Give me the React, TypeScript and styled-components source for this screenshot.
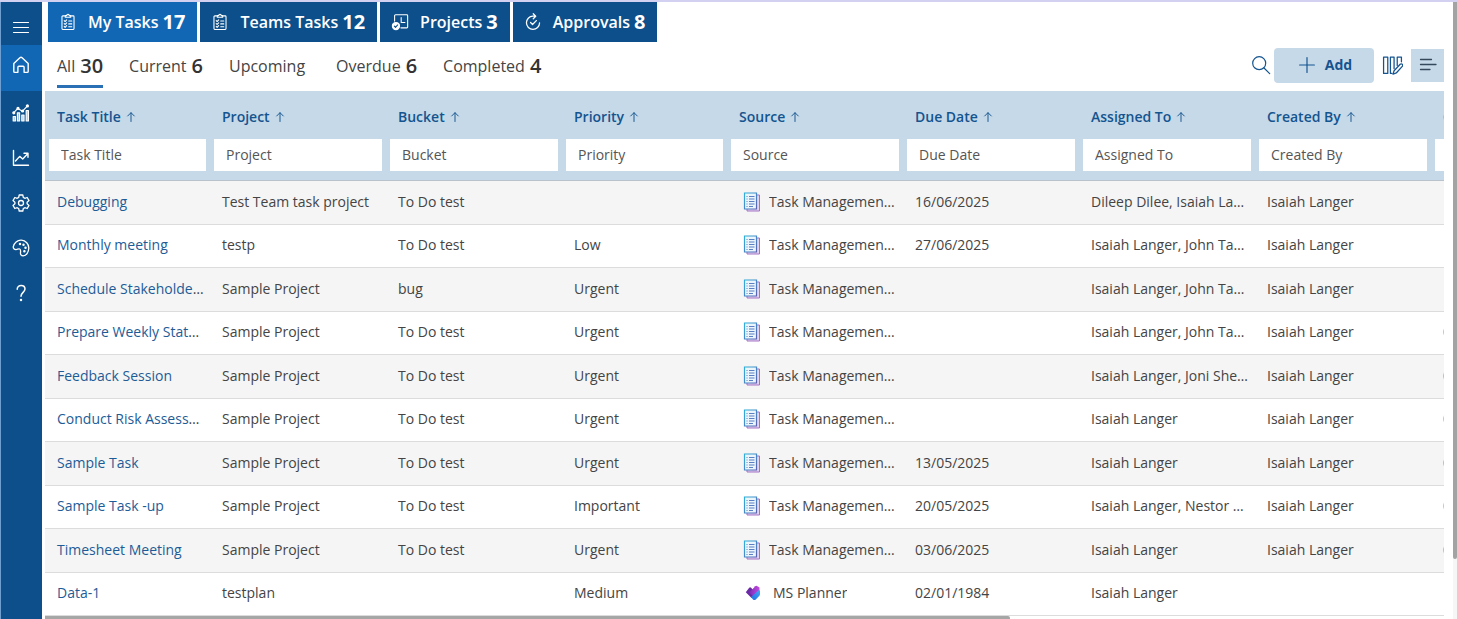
import React from "react";
import styled, { createGlobalStyle, css } from "styled-components";

const GlobalStyle = createGlobalStyle`
  *, *::before, *::after { box-sizing: border-box; }
  body {
    margin: 0;
    background: #ffffff;
    color: #444444;
    font-family: "Open Sans", "Noto Sans", sans-serif;
    font-size: 14px;
    line-height: 20px;
  }
  button, input { font: inherit; color: inherit; }
`;

const Page = styled.div`
  display: flex;
  min-height: 100vh;
  border-top: 2px solid #d3d1f1;
`;

const Sidebar = styled.nav`
  flex: none;
  width: 42px;
  display: flex;
  flex-direction: column;
  background: #0c4f8a;
  box-shadow: inset 1px 0 #6f9fd0;
`;

const SideButton = styled.button<{ $active?: boolean; $menu?: boolean }>`
  display: flex;
  align-items: center;
  justify-content: center;
  height: 45px;
  margin-left: 1px;
  padding: 0 1px 2px 0;
  border: 0;
  color: #ffffff;
  background: ${(p) => (p.$active ? "#1267b4" : "transparent")};
  cursor: pointer;
  ${(p) => p.$active && css`height: 46px; padding-bottom: 6px;`}
  ${(p) => p.$menu && css`height: 43px; padding: 9px 1px 0 0;`}
`;

const Main = styled.main`
  flex: 1;
  min-width: 0;
  display: flex;
  flex-direction: column;
  padding: 0 9px 0 3px;
`;

const TabBar = styled.div`
  display: flex;
  gap: 3px;
  padding-left: 3px;
`;

const Tab = styled.button<{ $active?: boolean }>`
  display: flex;
  align-items: center;
  height: 40px;
  padding: 0 12px 0 11px;
  border: 0;
  color: #ffffff;
  background: ${(p) => (p.$active ? "#1267b4" : "#0c4f8a")};
  font-size: 16px;
  font-weight: 600;
  line-height: 24px;
  white-space: nowrap;
  cursor: pointer;
`;

const TabLabel = styled.span`
  margin: 0 4px 0 11px;
`;

const TabCount = styled.span`
  font-size: 20px;
  font-weight: 700;
`;

const Toolbar = styled.div`
  display: flex;
  align-items: center;
  justify-content: space-between;
  height: 49px;
`;

const Filters = styled.div`
  display: flex;
  gap: 26px;
  height: 100%;
  padding-left: 12px;
`;

const Filter = styled.button<{ $active?: boolean }>`
  display: flex;
  align-items: center;
  gap: 5px;
  height: 46px;
  padding: 4px 0 0;
  border: 0;
  border-bottom: 3px solid ${(p) => (p.$active ? "#2a70b4" : "transparent")};
  background: none;
  font-size: 16px;
  white-space: nowrap;
  cursor: pointer;
`;

const FilterCount = styled.span`
  font-size: 20px;
  font-weight: 600;
  color: #333333;
`;

const Actions = styled.div`
  display: flex;
  align-items: center;
  padding-bottom: 3px;
  color: #14548f;
`;

const IconButton = styled.button<{ $filled?: boolean }>`
  display: flex;
  align-items: center;
  justify-content: center;
  width: ${(p) => (p.$filled ? "33px" : "37px")};
  height: 33px;
  padding: 0;
  border: 0;
  background: ${(p) => (p.$filled ? "#c5d9e8" : "none")};
  cursor: pointer;
`;

const SearchButton = styled(IconButton)`
  width: 26px;
`;

const AddButton = styled.button`
  display: flex;
  align-items: center;
  justify-content: center;
  gap: 9px;
  width: 100px;
  height: 35px;
  padding: 0 0 1px 2px;
  border: 0;
  border-radius: 4px;
  background: #c5d9e8;
  font-weight: 700;
  cursor: pointer;
`;

const GridView = styled.section`
  flex: 1;
  overflow: hidden;
`;

const Table = styled.table`
  width: 2026px;
  table-layout: fixed;
  border-collapse: collapse;
`;

const Col = styled.col<{ $narrow?: boolean }>`
  width: ${(p) => (p.$narrow ? "165px" : "176px")};
`;

const HeadCell = styled.th`
  height: 89px;
  padding: 0 4px;
  vertical-align: top;
  text-align: left;
  font-weight: 400;
  background: #c5d9e8;
  border-bottom: 1px solid #b9c2ca;
`;

const SortButton = styled.button`
  display: flex;
  align-items: center;
  gap: 4px;
  height: 48px;
  padding: 3px 8px 0;
  border: 0;
  background: none;
  color: #14548f;
  font-weight: 600;
  white-space: nowrap;
  cursor: pointer;
`;

const FilterInput = styled.input`
  display: block;
  width: 100%;
  height: 32px;
  padding: 0 12px 1px;
  border: 0;
  background: #ffffff;
  &::placeholder { color: #555555; opacity: 1; }
`;

const Row = styled.tr`
  height: 43px;
  border-bottom: 1px solid #dcdcdc;
  &:nth-child(odd) { height: 44px; background: #f5f5f5; }
`;

const Cell = styled.td`
  padding: 0 5px 1px 12px;
  overflow: hidden;
  text-overflow: ellipsis;
  white-space: nowrap;
`;

const TaskLink = styled.a`
  color: #1d5c97;
  text-decoration: none;
`;

const Source = styled.div<{ $planner?: boolean }>`
  display: flex;
  align-items: center;
  gap: ${(p) => (p.$planner ? "12px" : "8px")};
  padding-left: ${(p) => (p.$planner ? "6px" : "4px")};
  svg { flex: none; }
`;

const Ellipsis = styled.span`
  overflow: hidden;
  text-overflow: ellipsis;
`;

const HorizontalThumb = styled.div`
  width: 69%;
  height: 4px;
  border-radius: 0 2px 0 0;
  background: #a6a6a6;
`;

const VerticalTrack = styled.div`
  flex: none;
  width: 4px;
  background: #f6f6f6;
`;

const VerticalThumb = styled.div`
  height: 90vh;
  border-radius: 0 0 2px 2px;
  background: #a3a3a3;
`;

type IconProps = { size?: number; stroke?: number; children: React.ReactNode };

const Icon = ({ size = 20, stroke = 1.3, children }: IconProps) => (
  <svg
    width={size}
    height={size}
    viewBox="0 0 20 20"
    fill="none"
    stroke="currentColor"
    strokeWidth={stroke}
    strokeLinecap="round"
    strokeLinejoin="round"
    aria-hidden="true"
  >
    {children}
  </svg>
);

const MenuIcon = () => (
  <Icon stroke={1.2}><path d="M2.5 4.5h15M2.5 9.5h15M2.5 14.5h15" /></Icon>
);

const HomeIcon = () => (
  <Icon stroke={1.4}>
    <path d="M2.8 8.6 8.9 2.8a1.6 1.6 0 0 1 2.2 0l6.1 5.8v7.8a1 1 0 0 1-1 1h-2.6a.5.5 0 0 1-.5-.5v-4.7a1 1 0 0 0-1-1H7.9a1 1 0 0 0-1 1v4.7a.5.5 0 0 1-.5.5H3.8a1 1 0 0 1-1-1z" />
  </Icon>
);

const BarsIcon = () => (
  <Icon stroke={1.2}>
    <path d="M2.2 18v-4.500h2.200V18zM6.400 18V9.800h2.200V18zM10.800 18v-6h2.200v6zM15.200 18V7.500h2.200V18z" fill="#9fc6e8" />
    <path d="m2.600 9.800 4.200-4.400 4.700 2.800 5-5.400" />
    <circle cx="2.800" cy="9.800" r="1" fill="currentColor" />
    <circle cx="7" cy="5.300" r="1" fill="currentColor" />
    <circle cx="11.600" cy="8" r="1" fill="currentColor" />
    <circle cx="16.400" cy="2.900" r="1" fill="currentColor" />
  </Icon>
);

const TrendIcon = () => (
  <Icon stroke={1.4}>
    <path d="M2.500 2.500v14.800h15M4.500 13l4.200-4.600 3 2.600 5-5.200M13 5.300h4v4" />
  </Icon>
);

const GearIcon = () => (
  <Icon>
    <path d="M8.200 2h3.600l.5 2.400 1.500.9 2.400-.8 1.800 3.100-1.900 1.600v1.600l1.900 1.600-1.800 3.100-2.400-.8-1.500.9-.5 2.400H8.200l-.5-2.400-1.500-.9-2.400.8L2 12.400l1.900-1.600V9.200L2 7.600l1.800-3.100 2.400.8 1.500-.9z" />
    <circle cx="10" cy="10" r="2.500" />
  </Icon>
);

const PaletteIcon = () => (
  <Icon>
    <path d="M2.300 8.700C3 4.800 6.400 2 10.300 2.200c4.400.2 7.700 3.800 7.500 8.100-.2 4.200-2.600 7.500-5.600 7.500-2.100 0-3-1.500-2.700-3.200.2-1.500.4-3-.8-3.600-1.300-.6-2.300.7-3.700.6-1.700-.1-3-1.300-2.700-2.900z" />
    <circle cx="9" cy="6" r=".6" fill="currentColor" />
    <circle cx="12.500" cy="6.800" r=".6" fill="currentColor" />
    <circle cx="14.500" cy="9.800" r=".6" fill="currentColor" />
    <circle cx="13.400" cy="13.200" r=".6" fill="currentColor" />
  </Icon>
);

const HelpIcon = () => (
  <Icon stroke={1.5}>
    <path d="M6.200 6.200c0-2.200 1.700-3.800 3.900-3.800S14 3.900 14 6.100c0 3-4 3.700-4 7.100" />
    <circle cx="10" cy="17" r=".5" fill="currentColor" />
  </Icon>
);

const ClipboardIcon = () => (
  <Icon size={18} stroke={1.2}>
    <path d="M7 3.200H4.300a1 1 0 0 0-1 1v13.100a1 1 0 0 0 1 1h11.400a1 1 0 0 0 1-1V4.200a1 1 0 0 0-1-1H13M7 4.800V2.900h1.600a1.400 1.400 0 0 1 2.800 0H13v1.900zM5.800 8.500l1 1 1.700-1.800M10.800 8.900h3.400M5.800 11.700l1 1 1.700-1.800M10.800 12.100h3.400M5.800 14.900l1 1 1.700-1.800M10.800 15.300h3.400" />
  </Icon>
);

const ProjectIcon = () => (
  <Icon size={18} stroke={1.2}>
    <path d="M4 9V3a1 1 0 0 1 1-1h12.500a1 1 0 0 1 1 1v12.500a1 1 0 0 1-1 1H11M11.300 5v5.500h4.200" />
    <circle cx="5.500" cy="14.500" r="4" fill="currentColor" />
    <path d="m3.700 14.600 1.300 1.300 2.400-2.600" stroke="#0c4f8a" />
  </Icon>
);

const ApprovalIcon = () => (
  <Icon size={18} stroke={1.4}>
    <path d="M12.500 3.600H9.800a7.300 7.300 0 1 0 7.500 7.500M10.300.8l2.700 2.800-2.700 2.800M7.300 10.600l2.200 2.200 4.200-4.400" />
  </Icon>
);

const SearchIcon = () => (
  <Icon stroke={1.2}>
    <circle cx="8.200" cy="8.200" r="6.500" />
    <path d="m13 13 5.700 5.700" />
  </Icon>
);

const PlusIcon = () => (
  <Icon size={18} stroke={1.3}><path d="M10 1.800v16.400M1.800 10h16.400" /></Icon>
);

const ColumnsIcon = () => (
  <Icon size={21} stroke={1.2}>
    <path d="M1.500 2h4v15.500h-4zM11.500 13v-11h-3.500v15.500h1.500M18.500 6.500V2H14.500v8" />
    <path d="m10.500 18.300 1-3.300 5.800-6.200a1.400 1.400 0 0 1 2 2l-5.700 6.300z" />
  </Icon>
);

const ListIcon = () => (
  <Icon stroke={1.3}><path d="M2.500 4.500h11M2.500 9.500h15.500M2.500 14.500h9.500" stroke="#34495c" /></Icon>
);

const SortIcon = () => (
  <Icon size={12} stroke={1.6}><path d="M10 17.500V3M4.500 8.300 10 2.800l5.500 5.500" /></Icon>
);

const SheetIcon = () => (
  <svg width="18" height="20" viewBox="0 0 18 20" fill="none" aria-hidden="true">
    <defs>
      <linearGradient id="sheet" x1="0" y1="0" x2="1" y2="1">
        <stop offset="0" stopColor="#2fb0d8" />
        <stop offset="1" stopColor="#5b62b4" />
      </linearGradient>
    </defs>
    <path d="M4 3h12.500v16H4z" fill="#e3d3ef" stroke="#a374c4" />
    <path d="M1.500 1h12v16h-12z" fill="#eaf6fc" stroke="url(#sheet)" strokeWidth="1.200" />
    <path d="M3.500 4.500h1M6 4.500h5.500M3.500 7h1M6 7h5.500M3.500 9.500h1M6 9.500h5.500M3.500 12h1M6 12h5.500M3.500 14.500h1M6 14.500h4" stroke="#5a7fc4" />
  </svg>
);

const PlannerIcon = () => (
  <svg width="16" height="16" viewBox="0 0 16 16" aria-hidden="true">
    <defs>
      <linearGradient id="plannerTop" x1="0" y1="0" x2="1" y2="0">
        <stop offset="0" stopColor="#7b2bb8" />
        <stop offset="1" stopColor="#c44be0" />
      </linearGradient>
      <linearGradient id="plannerSide" x1="0" y1="1" x2="1" y2="0">
        <stop offset="0" stopColor="#1f6fe0" />
        <stop offset="1" stopColor="#45a8f5" />
      </linearGradient>
    </defs>
    <path d="M.8 7.200 4 3a1.500 1.500 0 0 1 2.300-.1L11 8l-4.500 5z" fill="#6b2aa5" />
    <path d="m4.300 7.500 6-6.300a1.500 1.500 0 0 1 1.700-.2l2.500 1.500V7L8 11z" fill="url(#plannerTop)" />
    <path d="m6 12 7.300-6.500a1 1 0 0 1 1.700.8v3a2 2 0 0 1-.6 1.400l-3.600 3.700a2 2 0 0 1-2.800 0z" fill="url(#plannerSide)" />
  </svg>
);

const sideItems = [
  { label: "Home", icon: <HomeIcon />, active: true },
  { label: "Dashboard", icon: <BarsIcon /> },
  { label: "Reports", icon: <TrendIcon /> },
  { label: "Settings", icon: <GearIcon /> },
  { label: "Theme", icon: <PaletteIcon /> },
  { label: "Help", icon: <HelpIcon /> },
];

const tabs = [
  { label: "My Tasks", count: 17, icon: <ClipboardIcon />, active: true },
  { label: "Teams Tasks", count: 12, icon: <ClipboardIcon /> },
  { label: "Projects", count: 3, icon: <ProjectIcon /> },
  { label: "Approvals", count: 8, icon: <ApprovalIcon /> },
];

const filters = [
  { label: "All", count: 30, active: true },
  { label: "Current", count: 6 },
  { label: "Upcoming" },
  { label: "Overdue", count: 6 },
  { label: "Completed", count: 4 },
];

const columns = [
  { label: "Task Title", narrow: true },
  { label: "Project" },
  { label: "Bucket" },
  { label: "Priority", narrow: true },
  { label: "Source" },
  { label: "Due Date" },
  { label: "Assigned To" },
  { label: "Created By" },
  { label: "Created Date" },
];

type Task = [
  title: string,
  project: string,
  bucket: string,
  priority: string,
  source: string,
  due: string,
  assigned: string,
  author: string,
  created: string,
];

const TM = "Task Management App";
const IL = "Isaiah Langer";

const tasks: Task[] = [
  ["Debugging", "Test Team task project", "To Do test", "", TM, "16/06/2025", "Dileep Dilee, Isaiah Langer", IL, ""],
  ["Monthly meeting", "testp", "To Do test", "Low", TM, "27/06/2025", "Isaiah Langer, John Tanner", IL, ""],
  ["Schedule Stakeholder Call", "Sample Project", "bug", "Urgent", TM, "", "Isaiah Langer, John Tanner", IL, ""],
  ["Prepare Weekly Status Note", "Sample Project", "To Do test", "Urgent", TM, "", "Isaiah Langer, John Tanner", IL, "09/05/2025"],
  ["Feedback Session", "Sample Project", "To Do test", "Urgent", TM, "", "Isaiah Langer, Joni Sherman", IL, "09/05/2025"],
  ["Conduct Risk Assessment", "Sample Project", "To Do test", "Urgent", TM, "", IL, IL, "09/05/2025"],
  ["Sample Task", "Sample Project", "To Do test", "Urgent", TM, "13/05/2025", IL, IL, "09/05/2025"],
  ["Sample Task -up", "Sample Project", "To Do test", "Important", TM, "20/05/2025", "Isaiah Langer, Nestor Wilke", IL, "09/05/2025"],
  ["Timesheet Meeting", "Sample Project", "To Do test", "Urgent", TM, "03/06/2025", IL, IL, "09/05/2025"],
  ["Data-1", "testplan", "", "Medium", "MS Planner", "02/01/1984", IL, "", ""],
];

export default function App() {
  return (
    <>
      <GlobalStyle />
      <Page>
        <Sidebar aria-label="Main">
          <SideButton $menu aria-label="Menu"><MenuIcon /></SideButton>
          {sideItems.map((item) => (
            <SideButton key={item.label} $active={item.active} aria-label={item.label}>
              {item.icon}
            </SideButton>
          ))}
        </Sidebar>
        <Main>
          <TabBar>
            {tabs.map((tab) => (
              <Tab key={tab.label} $active={tab.active}>
                {tab.icon}
                <TabLabel>{tab.label}</TabLabel>
                <TabCount>{tab.count}</TabCount>
              </Tab>
            ))}
          </TabBar>
          <Toolbar>
            <Filters>
              {filters.map((filter) => (
                <Filter key={filter.label} $active={filter.active}>
                  {filter.label}
                  <FilterCount>{filter.count}</FilterCount>
                </Filter>
              ))}
            </Filters>
            <Actions>
              <SearchButton aria-label="Search"><SearchIcon /></SearchButton>
              <AddButton><PlusIcon />Add</AddButton>
              <IconButton aria-label="Edit columns"><ColumnsIcon /></IconButton>
              <IconButton $filled aria-label="List options"><ListIcon /></IconButton>
            </Actions>
          </Toolbar>
          <GridView>
            <Table>
              <colgroup>
                {columns.map((c) => <Col key={c.label} $narrow={c.narrow} />)}
                <col />
              </colgroup>
              <thead>
                <tr>
                  {columns.map((c) => (
                    <HeadCell key={c.label} scope="col">
                      <SortButton>{c.label}<SortIcon /></SortButton>
                      <FilterInput placeholder={c.label} aria-label={`Filter by ${c.label}`} />
                    </HeadCell>
                  ))}
                  <HeadCell as="td" />
                </tr>
              </thead>
              <tbody>
                {tasks.map(([title, project, bucket, priority, source, due, assigned, author, created]) => (
                  <Row key={title}>
                    <Cell><TaskLink href="#">{title}</TaskLink></Cell>
                    <Cell>{project}</Cell>
                    <Cell>{bucket}</Cell>
                    <Cell>{priority}</Cell>
                    <Cell>
                      <Source $planner={source !== TM}>
                        {source === TM ? <SheetIcon /> : <PlannerIcon />}
                        <Ellipsis>{source}</Ellipsis>
                      </Source>
                    </Cell>
                    <Cell>{due}</Cell>
                    <Cell>{assigned}</Cell>
                    <Cell>{author}</Cell>
                    <Cell>{created}</Cell>
                    <Cell />
                  </Row>
                ))}
              </tbody>
            </Table>
          </GridView>
          <HorizontalThumb />
        </Main>
        <VerticalTrack><VerticalThumb /></VerticalTrack>
      </Page>
    </>
  );
}
